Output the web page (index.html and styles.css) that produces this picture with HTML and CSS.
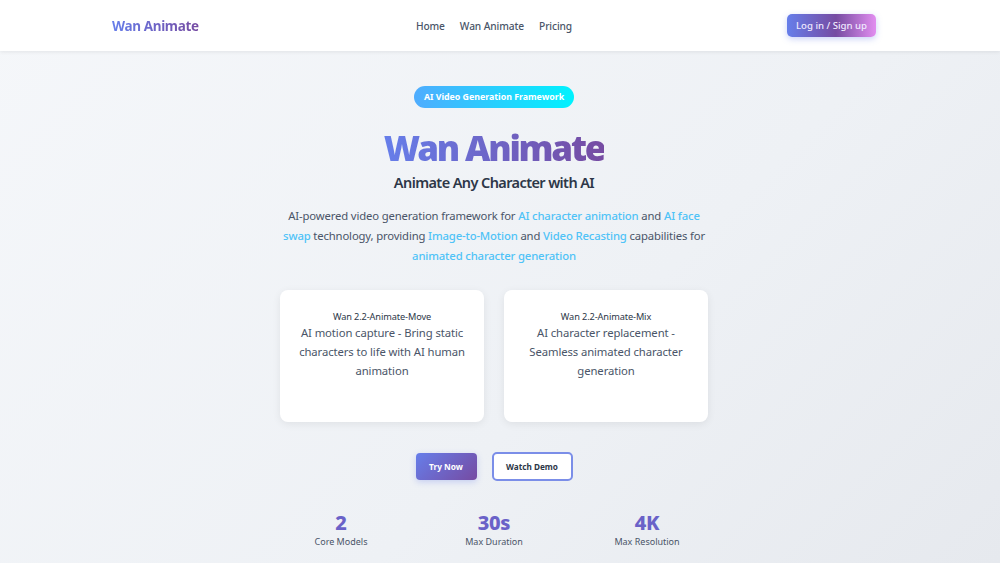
FILE: index.html
```html
<!DOCTYPE html>
<html lang="en">
<head>
<meta charset="utf-8">
<title>Wan Animate</title>
<link rel="stylesheet" href="styles.css">
</head>
<body>
<div class="page">
  <header class="nav">
    <div class="nav-inner">
      <a class="logo" href="#">Wan Animate</a>
      <nav class="links">
        <a href="#">Home</a>
        <a href="#">Wan Animate</a>
        <a href="#">Pricing</a>
      </nav>
      <div class="nav-right"><a class="login" href="#">Log in / Sign up</a></div>
    </div>
  </header>
  <main class="hero">
    <span class="badge">AI Video Generation Framework</span>
    <h1 class="title">Wan Animate</h1>
    <h2 class="subtitle">Animate Any Character with AI</h2>
    <p class="lead">AI-powered video generation framework for <span class="hl">AI character animation</span> and <span class="hl">AI face</span> <span class="hl">swap</span> technology, providing <span class="hl">Image-to-Motion</span> and <span class="hl">Video Recasting</span> capabilities for <span class="hl">animated character generation</span></p>
    <div class="cards">
      <div class="card">
        <div class="card-title">Wan 2.2-Animate-Move</div>
        <div class="card-text">AI motion capture - Bring static characters to life with AI human animation</div>
      </div>
      <div class="card">
        <div class="card-title">Wan 2.2-Animate-Mix</div>
        <div class="card-text">AI character replacement - Seamless animated character generation</div>
      </div>
    </div>
    <div class="actions">
      <a class="btn-primary" href="#">Try Now</a>
      <a class="btn-outline" href="#">Watch Demo</a>
    </div>
    <div class="stats">
      <div class="stat"><div class="num">2</div><div class="label">Core Models</div></div>
      <div class="stat"><div class="num">30s</div><div class="label">Max Duration</div></div>
      <div class="stat"><div class="num">4K</div><div class="label">Max Resolution</div></div>
    </div>
  </main>
</div>
</body>
</html>
```
FILE: styles.css
```css
* { box-sizing: border-box; }
html, body { margin: 0; padding: 0; }
body {
  font-family: "Noto Sans", "Open Sans", sans-serif;
  background: linear-gradient(135deg, #f5f7fa 0%, #eef1f5 60%, #e6e9ee 100%);
  min-height: 563px;
  overflow: hidden;
}
a { text-decoration: none; }
.page { width: 988px; }
.nav {
  background: #fff;
  height: 51px;
  box-shadow: 0 1px 4px rgba(0,0,0,0.08);
  width: 1000px;
  padding-right: 12px;
  position: relative;
}
.nav-inner {
  width: 764px;
  margin: 0 auto;
  height: 51px;
  display: grid;
  grid-template-columns: 1fr auto 1fr;
  align-items: center;
}
.logo {
  justify-self: start;
  font-size: 13.5px;
  font-weight: 700;
  background: linear-gradient(90deg, #667eea, #764ba2);
  -webkit-background-clip: text;
  background-clip: text;
  color: transparent;
  letter-spacing: -0.35px;
}
.links { display: flex; gap: 15px; }
.links a { font-size: 10.2px; color: #4a5568; font-weight: 500; letter-spacing: -0.1px; }
.nav-right { display: flex; justify-content: flex-end; }
.login {
  display: flex;
  align-items: center;
  height: 23px;
  padding: 0 9px;
  border-radius: 5px;
  font-size: 9.6px;
  color: #f0eaff;
  font-weight: 500;
  background: linear-gradient(90deg, #667eea 0%, #764ba2 55%, #e28ef0 100%);
  box-shadow: 0 2px 6px rgba(102,126,234,0.35);
}
.hero {
  display: flex;
  flex-direction: column;
  align-items: center;
  padding-top: 35px;
}
.badge {
  display: inline-flex;
  align-items: center;
  height: 22px;
  padding: 0 10px;
  border-radius: 11px;
  background: linear-gradient(90deg, #4facfe, #00f2fe);
  color: #fff;
  font-size: 8.8px;
  font-weight: 700;
}
.title {
  margin: 18px 0 0;
  font-size: 35px;
  line-height: 44px;
  font-weight: 900;
  letter-spacing: -2.2px;
  background: linear-gradient(90deg, #667eea, #764ba2);
  -webkit-background-clip: text;
  background-clip: text;
  color: transparent;
}
.subtitle {
  margin: 0;
  font-size: 14.5px;
  line-height: 24px;
  font-weight: 600;
  color: #2d3748;
  letter-spacing: -0.6px;
}
.lead {
  margin: 12px 0 0;
  width: 430px;
  text-align: center;
  font-size: 11.3px;
  line-height: 20px;
  color: #4a5568;
  letter-spacing: -0.15px;
}
.hl { color: #4fc3f7; font-weight: 500; }
.cards {
  margin-top: 24px;
  display: flex;
  gap: 20px;
}
.card {
  width: 204px;
  height: 132px;
  background: #fff;
  border-radius: 8px;
  box-shadow: 0 2px 8px rgba(0,0,0,0.07);
  padding: 20px 14px 0;
  text-align: center;
}
.card-title { font-size: 9.2px; color: #2d3748; line-height: 13px; letter-spacing: -0.1px; }
.card-text { font-size: 11.3px; line-height: 19px; color: #4a5568; margin-top: 0; letter-spacing: -0.1px; }
.actions {
  margin-top: 30px;
  display: flex;
  gap: 15px;
  align-items: center;
}
.btn-primary {
  width: 61px;
  height: 27px;
  display: flex;
  align-items: center;
  justify-content: center;
  border-radius: 4px;
  background: linear-gradient(135deg, #667eea, #764ba2);
  color: #fff;
  font-size: 8.3px;
  font-weight: 700;
  box-shadow: 0 2px 6px rgba(102,126,234,0.3);
}
.btn-outline {
  width: 81px;
  height: 29px;
  display: flex;
  align-items: center;
  justify-content: center;
  border-radius: 5px;
  background: #fff;
  border: 2px solid #7b8ee8;
  color: #2d3748;
  font-size: 8.2px;
  font-weight: 700;
}
.stats {
  margin-top: 30px;
  display: grid;
  grid-template-columns: repeat(3, 153px);
}
.stat { text-align: center; }
.num { font-size: 20px; line-height: 24px; font-weight: 800; color: #6a62c8; letter-spacing: -0.3px; }
.label { font-size: 9px; line-height: 13px; color: #4a5568; }
```
